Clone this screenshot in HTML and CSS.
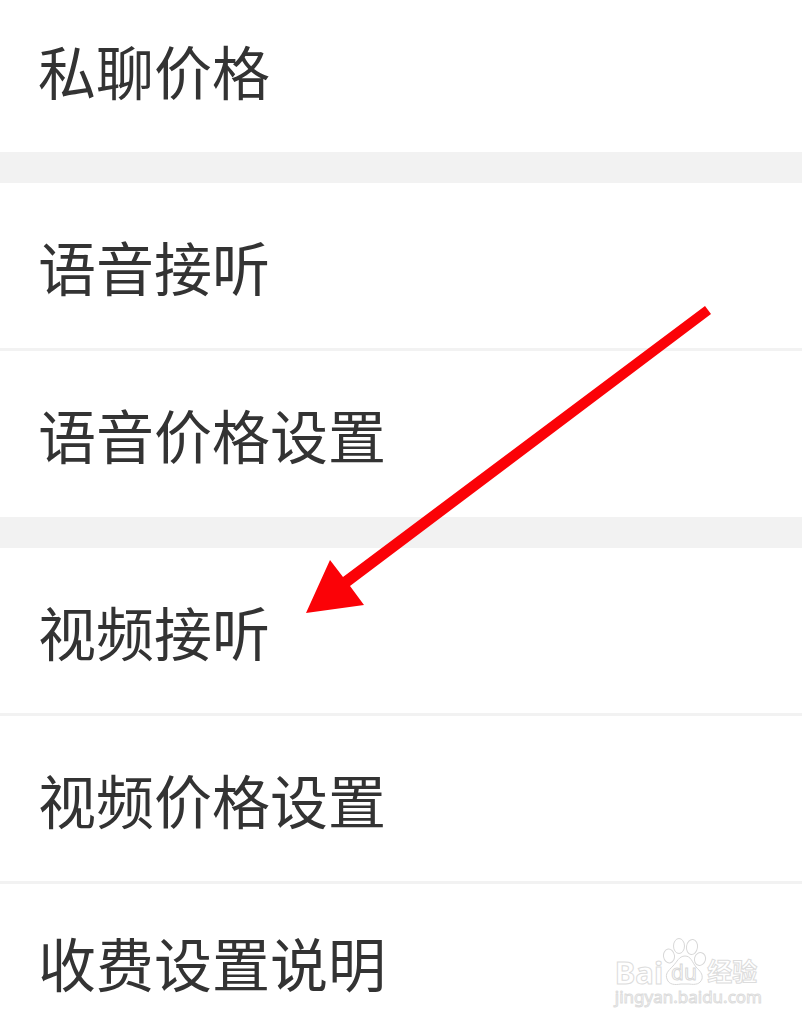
FILE: index.html
```html
<!DOCTYPE html>
<html lang="zh-CN">
<head>
<meta charset="utf-8">
<meta name="viewport" content="width=device-width, initial-scale=1">
<title>收费设置</title>
<link rel="stylesheet" href="styles.css">
</head>
<body>
<main class="settings">
<section class="group first"><div class="row">私聊价格</div></section>
<section class="group"><div class="row">语音接听</div><div class="row">语音价格设置</div></section>
<section class="group last"><div class="row">视频接听</div><div class="row">视频价格设置</div><div class="row">收费设置说明</div></section>
<svg class="arrow" viewBox="0 0 406 308" aria-hidden="true"><path d="M399 0 37 271 24 254 0 307 58 299 44 280 405 8Z" fill="#fb0207"/></svg>
<div class="watermark">
<div class="brand"><span class="latin">Bai</span><svg class="paw" viewBox="0 0 44 48" aria-hidden="true"><g fill="#fff" stroke="#d8d8d8" stroke-width="1"><ellipse cx="6" cy="19" rx="5.5" ry="7" transform="rotate(-8 6 19)"/><ellipse cx="16" cy="9" rx="5.5" ry="7.5"/><ellipse cx="29" cy="10" rx="5.5" ry="7.5" transform="rotate(8 29 10)"/><ellipse cx="37" cy="22" rx="5.5" ry="6.5" transform="rotate(15 37 22)"/><path d="M22 19c-6 0-8 6-12 10-5 5-8 8-6 13 2 6 8 6 14 5h8c7 1 11 0 13-5 1-5-2-8-6-12-4-5-5-11-11-11Z"/></g><text class="du" x="21" y="43" text-anchor="middle">du</text></svg><span class="cjk">经验</span></div>
<div class="site">jingyan.baidu.com</div>
</div>
</main>
</body>
</html>
```
FILE: styles.css
```css
* { box-sizing: border-box; }
body { margin: 0; background: #fff; color: #333; font-family: "Noto Sans CJK SC", sans-serif; }
.settings { position: relative; min-height: 100vh; overflow: hidden; }
.group { padding: 0 0 1px; border-bottom: 31px solid #f2f2f2; }
.row { height: 165px; padding: 0 38px; display: flex; align-items: center; font-size: 58px; line-height: 84px; }
.row + .row { height: 168px; border-top: 3px solid #f2f2f2; }
.first .row { height: 151px; padding-bottom: 12px; }
.last { padding: 0; border-bottom: 0; }
.last .row:last-child { height: 158px; }
.arrow { position: absolute; left: 306px; top: 306px; width: 406px; height: 308px; }
.watermark { position: absolute; right: 40px; top: 937px; color: #fff; font-family: "Noto Sans", "Noto Sans CJK SC", sans-serif; -webkit-text-stroke: 1px #dcdcdc; }
.brand { display: flex; align-items: flex-end; font-weight: 700; }
.latin { font-size: 31px; line-height: 26px; }
.cjk { font-size: 25px; line-height: 28px; }
.paw { width: 44px; height: 48px; }
.du { font-size: 21px; font-weight: 400; fill: #fff; stroke: #d8d8d8; stroke-width: 1px; }
.site { font-size: 17px; line-height: 24px; }
```
